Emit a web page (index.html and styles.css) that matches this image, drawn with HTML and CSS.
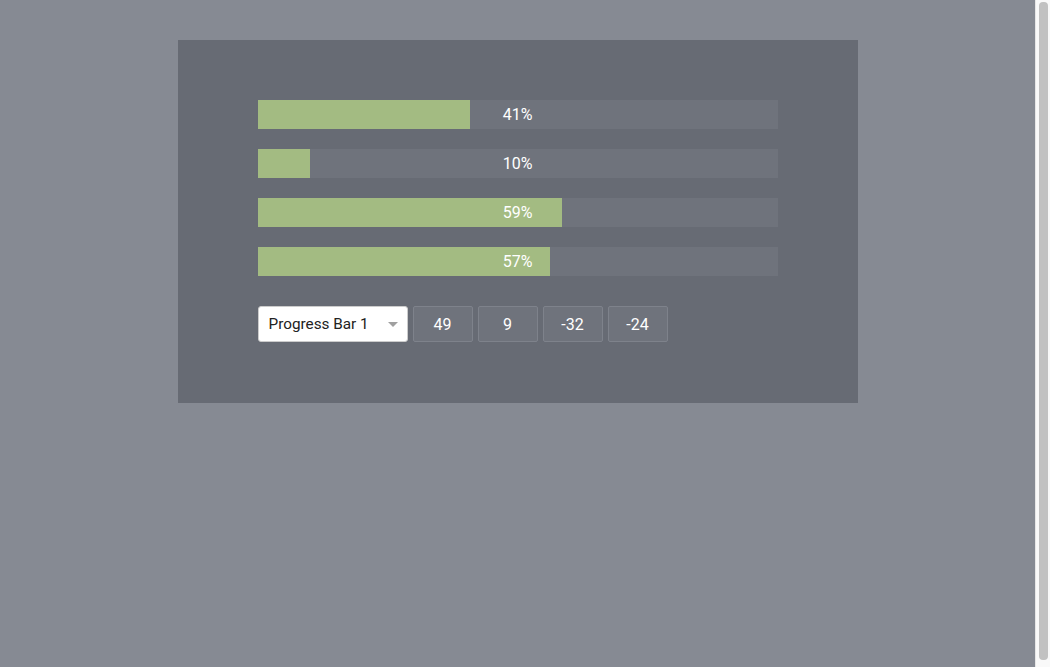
FILE: index.html
```html
<!DOCTYPE html>
<html>
<head>
<meta charset="utf-8">
<link rel="stylesheet" href="styles.css">
</head>
<body>
<main class="panel">
  <div class="bars">
    <div class="bar"><div class="fill" style="width:40.8%"></div><span class="label">41%</span></div>
    <div class="bar"><div class="fill" style="width:10%"></div><span class="label">10%</span></div>
    <div class="bar"><div class="fill" style="width:58.5%"></div><span class="label">59%</span></div>
    <div class="bar"><div class="fill" style="width:56.2%"></div><span class="label">57%</span></div>
  </div>
  <div class="controls">
    <div class="select-wrap">
      <select class="select">
        <option>Progress Bar 1</option>
        <option>Progress Bar 2</option>
        <option>Progress Bar 3</option>
        <option>Progress Bar 4</option>
      </select>
    </div>
    <button class="btn">49</button>
    <button class="btn">9</button>
    <button class="btn">-32</button>
    <button class="btn">-24</button>
  </div>
</main>
<div class="scrollbar"><div class="thumb"></div></div>
</body>
</html>
```
FILE: styles.css
```css
html {
  background: #868a93;
}
body {
  margin: 0 15px 0 0;
  padding-top: 40px;
  min-height: 660px;
  box-sizing: border-box;
  font-family: Roboto, "Liberation Sans", sans-serif;
  font-size: 16px;
}
.panel {
  width: 680px;
  margin: 0 auto;
  box-sizing: border-box;
  padding: 60px 80px 61px;
  background: #676b74;
}
.bars {
  display: flex;
  flex-direction: column;
  gap: 20px;
}
.bar {
  position: relative;
  height: 29px;
  background: #6f737c;
  display: flex;
  align-items: center;
  justify-content: center;
}
.fill {
  position: absolute;
  left: 0;
  top: 0;
  bottom: 0;
  background: #a3bb82;
}
.label {
  position: relative;
  color: #ffffff;
  font-size: 16px;
}
.controls {
  display: flex;
  gap: 5px;
  margin-top: 30px;
  height: 36px;
}
.select-wrap {
  position: relative;
  width: 150px;
}
.select-wrap::after {
  content: "";
  position: absolute;
  right: 10px;
  top: 16px;
  border-left: 5px solid transparent;
  border-right: 5px solid transparent;
  border-top: 5px solid #a0a0a0;
  pointer-events: none;
}
.select {
  appearance: none;
  -webkit-appearance: none;
  width: 100%;
  height: 36px;
  box-sizing: border-box;
  border: 1px solid #cccccc;
  border-radius: 3px;
  background: #ffffff;
  color: #222222;
  font-family: Roboto, "Liberation Sans", sans-serif;
  font-size: 15.3px;
  padding: 0 10px;
}
.btn {
  width: 60px;
  height: 36px;
  box-sizing: border-box;
  border: 1px solid #7e828b;
  border-radius: 2px;
  background: #6f737c;
  color: #ffffff;
  font-family: Roboto, "Liberation Sans", sans-serif;
  font-size: 16px;
  padding: 0;
}
.scrollbar {
  position: fixed;
  top: 0;
  right: 0;
  width: 15px;
  height: 100%;
  box-sizing: border-box;
  background: #f9f9f9;
  border-left: 1px solid #e6e6e6;
  padding: 2px 2px 7px 3px;
}
.thumb {
  height: 100%;
  background: #c1c1c1;
  border-radius: 4px;
}
```
